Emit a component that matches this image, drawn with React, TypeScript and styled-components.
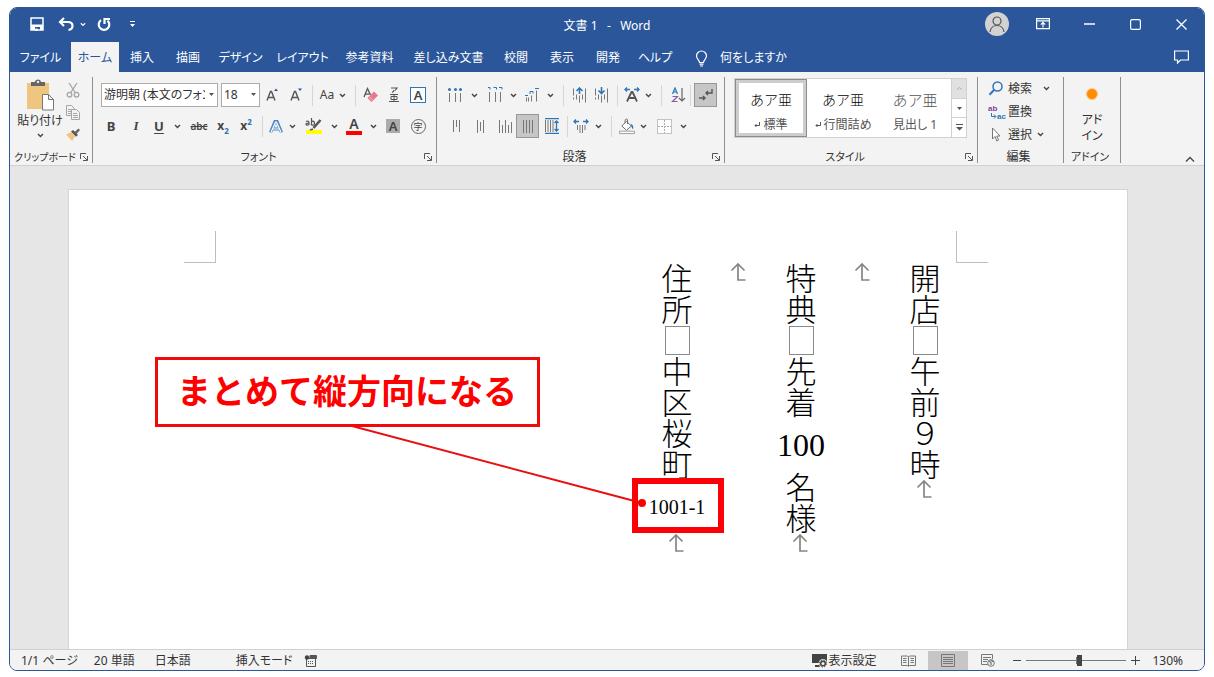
import React from 'react';
import styled, { createGlobalStyle, css } from 'styled-components';

const BLUE = '#2b579a';
const INK = '#444444';
const ACCENT = '#2e75b6';

const GlobalStyle = createGlobalStyle`
  *, *::before, *::after { box-sizing: border-box; }
  body { margin: 0; background: #fff; }
  body, button, select, input {
    font-family: "Noto Sans", "Noto Sans CJK JP", sans-serif;
    font-size: 12px;
    line-height: 16px;
    color: #333;
    font-feature-settings: "palt";
  }
  button { background: none; border: 0; padding: 0; margin: 0; }
`;

/* ---------- window frame ---------- */

const Desktop = styled.div`
  display: flex;
  min-height: 100vh;
  padding: 7px 9px 6px;
`;

const Window = styled.div`
  flex: 1;
  min-width: 0;
  display: flex;
  flex-direction: column;
  border: 1px solid ${BLUE};
  border-radius: 8px;
  overflow: hidden;
  background: #f3f3f3;
`;

const TitleBar = styled.header`
  display: grid;
  grid-template-columns: 1fr auto 1fr;
  align-items: start;
  height: 34px;
  background: ${BLUE};
  color: #fff;
`;

const QuickAccess = styled.div`
  display: flex;
  padding-left: 12px;
`;

const QuickButton = styled.button<{ $w: number }>`
  width: ${p => p.$w}px;
  height: 32px;
  display: flex;
  align-items: center;
  justify-content: center;
  color: #fff;
`;

const WindowTitle = styled.h1`
  margin: 0;
  padding-top: 10px;
  font-size: 12px;
  line-height: 16px;
  font-weight: 400;
  color: #fff;
  white-space: pre;
`;

const WindowControls = styled.div`
  display: flex;
  justify-content: flex-end;
`;

const ControlButton = styled.button`
  width: 46px;
  height: 32px;
  display: flex;
  align-items: center;
  justify-content: center;
  color: #fff;
`;

const Avatar = styled.span`
  width: 24px;
  height: 24px;
  border-radius: 50%;
  background: #d2d2d2;
  display: flex;
  align-items: center;
  justify-content: center;
`;

const TabBar = styled.nav`
  display: flex;
  height: 30px;
  background: ${BLUE};
`;

const Tab = styled.button<{ $w: number; $active?: boolean }>`
  width: ${p => p.$w}px;
  height: 30px;
  padding-top: 2px;
  display: flex;
  align-items: center;
  justify-content: center;
  white-space: nowrap;
  color: ${p => (p.$active ? BLUE : '#fff')};
  background: ${p => (p.$active ? '#f3f3f3' : 'transparent')};
`;

const TellMe = styled.button`
  display: flex;
  align-items: center;
  gap: 12px;
  padding: 2px 0 0 16px;
  color: #fff;
`;

const CommentButton = styled(ControlButton)`
  height: 30px;
  margin-left: auto;
`;

/* ---------- ribbon ---------- */

const Ribbon = styled.div`
  display: flex;
  padding: 5px 0 2px;
  height: 94px;
  background: #f3f3f3;
  border-bottom: 1px solid #d2d0ce;
`;

const Group = styled.section<{ $w: number }>`
  width: ${p => p.$w}px;
  flex: none;
  display: flex;
  flex-direction: column;
  justify-content: space-between;
  border-right: 1px solid #8f8f8f;
`;

const GroupFooter = styled.footer`
  display: flex;
  align-items: flex-end;
  height: 10px;
  padding-right: 4px;
`;

const GroupName = styled.span<{ $size: number }>`
  flex: 1;
  text-align: center;
  white-space: nowrap;
  font-size: ${p => p.$size}px;
  line-height: 12px;
`;

const Launcher = styled.button`
  display: flex;
  width: 8px;
  height: 10px;
`;

const ToolRows = styled.div`
  display: flex;
  flex-direction: column;
  gap: 7px;
  padding: 6px 0 0 8px;
`;

const ToolRow = styled.div`
  display: flex;
  align-items: center;
  height: 24px;
`;

const Tool = styled.button<{ $w: number; $pressed?: boolean }>`
  width: ${p => p.$w}px;
  height: 24px;
  flex: none;
  display: flex;
  align-items: center;
  justify-content: center;
  color: ${INK};
  line-height: 24px;
  ${p =>
    p.$pressed &&
    css`
      background: #c6c6c6;
      border: 1px solid #979797;
    `}
`;

const Divider = styled.span<{ $w: number }>`
  width: ${p => p.$w}px;
  flex: none;
  display: flex;
  justify-content: center;
  &::before {
    content: '';
    width: 1px;
    height: 21px;
    background: #d6d6d6;
  }
`;

const Letter = styled.span<{ $size?: number; $italic?: boolean }>`
  font-size: ${p => p.$size ?? 13}px;
  font-weight: 700;
  font-style: ${p => (p.$italic ? 'italic' : 'normal')};
  font-family: ${p => (p.$italic ? '"Liberation Serif", serif' : '"Noto Sans", sans-serif')};
`;

const Underlined = styled(Letter)`
  text-decoration: underline;
  text-underline-offset: 2px;
`;

const Struck = styled.span`
  font-size: 10px;
  font-weight: 600;
  text-decoration: line-through;
`;

const Script = styled.span<{ $raise?: boolean }>`
  font-size: 8px;
  line-height: 8px;
  font-weight: 700;
  color: ${ACCENT};
  align-self: ${p => (p.$raise ? 'flex-start' : 'flex-end')};
  padding: 4px 0 3px;
`;

const BoxedLetter = styled.span`
  width: 16px;
  height: 16px;
  border: 1px solid ${ACCENT};
  background: #fff;
  text-align: center;
  font-size: 13px;
  line-height: 14px;
  font-weight: 600;
`;

const ShadedLetter = styled.span`
  width: 14px;
  height: 14px;
  background: #ababab;
  text-align: center;
  font-size: 13px;
  line-height: 14px;
  font-weight: 600;
`;

const CircledLetter = styled.span`
  width: 15px;
  height: 15px;
  border: 1px solid #666;
  border-radius: 50%;
  text-align: center;
  font-size: 9px;
  line-height: 13px;
`;

const BarLetter = styled.span<{ $bar: string }>`
  width: 16px;
  height: 18px;
  border-bottom: 4px solid ${p => p.$bar};
  text-align: center;
  font-size: 14px;
  line-height: 13px;
  font-weight: 600;
`;

const Combo = styled.span<{ $w: number }>`
  position: relative;
  width: ${p => p.$w}px;
  height: 24px;
  flex: none;
  & + & { margin-left: 3px; }
`;

const ComboSelect = styled.select`
  appearance: none;
  width: 100%;
  height: 24px;
  padding: 0 12px 0 2px;
  border: 1px solid #ababab;
  border-radius: 0;
  background: #fff;
  color: #333;
`;

const ComboCaret = styled.svg`
  position: absolute;
  right: 4px;
  top: 10px;
  pointer-events: none;
`;

const ClipboardBody = styled.div`
  display: flex;
  gap: 3px;
  padding: 2px 0 0 7px;
`;

const PasteButton = styled.button`
  width: 46px;
  display: flex;
  flex-direction: column;
  align-items: center;
  white-space: nowrap;
`;

const PasteLabel = styled.span`
  padding-top: 2px;
`;

const IconStack = styled.div`
  display: flex;
  flex-direction: column;
`;

const StackButton = styled.button`
  width: 14px;
  height: 22px;
  display: flex;
  align-items: center;
  justify-content: center;
`;

const Gallery = styled.div`
  display: flex;
  margin: 1px 0 0 9px;
  width: 233px;
  height: 60px;
  background: #fff;
  border: 1px solid #d2d0ce;
`;

const StyleCard = styled.button<{ $selected?: boolean }>`
  width: 72px;
  height: 58px;
  display: flex;
  flex-direction: column;
  align-items: center;
  justify-content: flex-end;
  padding-bottom: 4px;
  gap: 9px;
  white-space: nowrap;
  ${p =>
    p.$selected &&
    css`
      border: 1px solid #8c8c8c;
      padding-bottom: 3px;
      box-shadow: inset 0 0 0 3px #cdcdcd;
    `}
`;

const Sample = styled.span<{ $light?: boolean }>`
  font-size: ${p => (p.$light ? 15 : 14)}px;
  line-height: 16px;
  font-weight: 300;
  color: ${p => (p.$light ? '#555' : '#000')};
  font-feature-settings: normal;
`;

const StyleName = styled.span`
  display: flex;
  align-items: center;
  gap: 3px;
  font-size: 12px;
  line-height: 16px;
  color: #555;
`;

const GalleryScroll = styled.div`
  flex: 1;
  display: flex;
  flex-direction: column;
`;

const ScrollButton = styled.button<{ $off?: boolean }>`
  flex: 1;
  display: flex;
  align-items: center;
  justify-content: center;
  border-left: 1px solid #d2d0ce;
  border-bottom: 1px solid #d2d0ce;
  background: ${p => (p.$off ? '#e1e1e1' : '#fff')};
  &:last-child { border-bottom: 0; }
`;

const EditList = styled.div`
  display: flex;
  flex-direction: column;
  padding-left: 10px;
`;

const EditButton = styled.button`
  display: grid;
  grid-template-columns: 18px auto auto;
  justify-content: start;
  align-items: center;
  height: 23px;
  column-gap: 2px;
`;

const EditLabel = styled.span<{ $gap?: number }>`
  padding-right: ${p => p.$gap ?? 0}px;
`;

const AddinButton = styled.button`
  display: flex;
  flex-direction: column;
  align-items: center;
  gap: 12px;
  padding-top: 11px;
`;

const Dot = styled.span`
  width: 12px;
  height: 12px;
  border-radius: 50%;
  border: 1px solid #ffc880;
  background: #ff8c00;
`;

const Collapse = styled.button`
  margin-left: auto;
  width: 28px;
  display: flex;
  align-items: flex-end;
  justify-content: center;
`;

/* ---------- document ---------- */

const Workspace = styled.main`
  flex: 1;
  display: flex;
  padding: 23px 76px 0 58px;
  background: #e6e6e6;
`;

const Page = styled.article`
  position: relative;
  flex: 1;
  min-width: 0;
  padding-top: 41px;
  background: #fff;
  border: 1px solid #d4d4d4;
  border-bottom: 0;
`;

const MarginMarks = styled.div`
  display: flex;
  justify-content: space-between;
  padding: 0 139px 0 115px;
`;

const MarginMark = styled.span<{ $side: 'left' | 'right' }>`
  width: 32px;
  height: 32px;
  border-bottom: 1px solid #bdbdbd;
  ${p => (p.$side === 'left' ? 'border-right' : 'border-left')}: 1px solid #bdbdbd;
`;

const Lines = styled.div`
  display: flex;
  flex-direction: row-reverse;
  padding-right: 171px;
`;

const Line = styled.div`
  width: 62px;
  display: flex;
  flex-direction: column;
  align-items: center;
`;

const Vertical = styled.span`
  writing-mode: vertical-rl;
  text-orientation: upright;
  font-family: "Noto Sans CJK JP", sans-serif;
  font-size: 31px;
  line-height: 31px;
  font-weight: 300;
  font-feature-settings: normal;
  color: #000;
`;

const SpaceMark = styled.span`
  width: 25px;
  height: 29px;
  margin: 1px 0;
  border: 1px solid #8a8a8a;
`;

const Across = styled.span<{ $size: number }>`
  position: relative;
  height: 54px;
  display: flex;
  align-items: center;
  font-family: "Liberation Serif", serif;
  font-size: ${p => p.$size}px;
  line-height: 32px;
  color: #000;
`;

const Highlight = styled.span`
  position: absolute;
  left: 50%;
  top: -2px;
  width: 92px;
  height: 55px;
  margin-left: -45px;
  border: 6px solid #fb0007;
`;

const Callout = styled.aside`
  position: absolute;
  right: 587px;
  top: 167px;
  padding: 12px 20px 13px 19px;
  border: 3px solid #f00a0a;
  background: #fff;
  color: #ff0000;
  font-size: 34px;
  line-height: 39px;
  font-weight: 700;
  font-feature-settings: normal;
  white-space: nowrap;
`;

const Leader = styled.svg`
  position: absolute;
  right: 476px;
  top: 236px;
`;

/* ---------- status bar ---------- */

const StatusBar = styled.footer`
  display: flex;
  align-items: center;
  height: 21px;
  padding: 1px 20px 0 11px;
  border-top: 1px solid #d2d0ce;
  background: #f3f3f3;
`;

const StatusItem = styled.button<{ $gap: number }>`
  display: flex;
  align-items: center;
  margin-right: ${p => p.$gap}px;
  white-space: nowrap;
`;

const ZoomLevel = styled(StatusItem)`
  margin-left: 8px;
`;

const ViewButton = styled.button<{ $on?: boolean }>`
  width: 40px;
  height: 20px;
  display: flex;
  align-items: center;
  justify-content: center;
  background: ${p => (p.$on ? '#c8c6c4' : 'transparent')};
`;

const Spacer = styled.span`
  flex: 1;
`;

const ZoomButton = styled.button`
  width: 18px;
  height: 20px;
  display: flex;
  align-items: center;
  justify-content: center;
`;

const ZoomSlider = styled.input`
  appearance: none;
  width: 100px;
  height: 14px;
  margin: 0;
  background: linear-gradient(#777, #777) center / 100% 1px no-repeat,
    linear-gradient(#777, #777) center / 1px 7px no-repeat;
  &::-webkit-slider-thumb {
    appearance: none;
    width: 5px;
    height: 11px;
    background: #444;
  }
`;

/* ---------- icons ---------- */

type Stroke = { d: string; w: number; h: number; c?: string; sw?: number };

const Draw = ({ d, w, h, c = 'currentColor', sw = 1 }: Stroke) => (
  <svg width={w} height={h} viewBox={`0 0 ${w} ${h}`} fill="none" stroke={c} strokeWidth={sw} aria-hidden="true">
    <path d={d} />
  </svg>
);

const Chevron = ({ c = '#444' }: { c?: string }) => <Draw w={7} h={5} d="M1 1 3.500 3.500 6 1" c={c} sw={1.4} />;
const Caret = () => (
  <svg width="5" height="3" viewBox="0 0 5 3" aria-hidden="true">
    <path d="M0 0h5L2.500 3z" fill="#555" />
  </svg>
);

const SaveIcon = () => (
  <svg width="14" height="14" viewBox="0 0 14 14" fill="none" stroke="#fff" strokeWidth="1.500">
    <path d="M1 1h12v12H1z" />
    <path d="M1 7.500h12V13h-3v-3H5v3H1z" fill="#fff" stroke="none" />
    <path d="M5.500 11.500h2V14h-2z" fill="#fff" stroke="none" />
  </svg>
);
const UndoIcon = () => (
  <svg width="16" height="14" viewBox="0 0 16 14" fill="none" stroke="#fff" strokeWidth="2.200">
    <path d="M6 1 2 5l4 4M2.500 5H10c3 0 4.500 1.800 4.500 4 0 2-1.500 3.500-4 4" />
  </svg>
);
const RedoIcon = () => (
  <svg width="14" height="15" viewBox="0 0 14 15" fill="none" stroke="#fff" strokeWidth="2.200">
    <path d="M4 3.200A5.300 5.300 0 1 0 10.500 3.600M7.500 7V2H13" />
  </svg>
);
const MoreIcon = () => (
  <svg width="5" height="7" viewBox="0 0 5 7" fill="#fff">
    <path d="M0 0h5v1H0zM0 3h5L2.500 6z" />
  </svg>
);
const PersonIcon = () => (
  <svg width="16" height="17" viewBox="0 0 16 17" fill="none" stroke="#555" strokeWidth="1.200">
    <circle cx="8" cy="5" r="4" />
    <path d="M1 16c.5-4 3.500-6.500 7-6.500s6.500 2.500 7 6.500" />
  </svg>
);
const RibbonModeIcon = () => (
  <svg width="14" height="12" viewBox="0 0 14 12" fill="none" stroke="#fff" strokeWidth="1.200">
    <path d="M.6.6h12.800v10H.6zM.6 2.800h12.800M7 9.500V4.600M4.800 6.600 7 4.400l2.200 2.200" />
  </svg>
);
const BulbIcon = () => (
  <svg width="13" height="17" viewBox="0 0 13 17" fill="none" stroke="#fff" strokeWidth="1.200">
    <path d="M4.500 12.500c0-2.500-3-3.500-3-6.500a5 5 0 0 1 10 0c0 3-3 4-3 6.500zM4.500 14.200h4M5 16h3" />
  </svg>
);
const CommentIcon = () => <Draw w={15} h={14} d="M.6 1h13.800v9H6.500L3.500 13v-3H.6z" c="#fff" sw={1.200} />;

const PasteIcon = () => (
  <svg width="30" height="32" viewBox="0 0 30 32">
    <path d="M2 4h22v26H2z" fill="#eec680" />
    <path d="M6 3h4c0-3.500 6-3.500 6 0h4v4H6z" fill="#666" />
    <circle cx="13" cy="3" r="1.200" fill="#eee" />
    <path d="M17.500 15.500h6l5 5V31h-11zM23.500 15.500v5h5" fill="#fff" stroke="#777" />
  </svg>
);
const CutIcon = () => (
  <svg width="14" height="15" viewBox="0 0 14 15" fill="none" stroke="#a6a6a6" strokeWidth="1.300">
    <path d="M3 0 9.500 10M11 0 4.500 10" />
    <circle cx="3.500" cy="11.700" r="2.300" />
    <circle cx="10.500" cy="11.700" r="2.300" />
  </svg>
);
const CopyIcon = () => (
  <svg width="14" height="15" viewBox="0 0 14 15" fill="#f3f3f3" stroke="#a6a6a6">
    <path d="M.5.5h5l2.500 2.500v7.500H.5zM2 4.500h4M2 6.500h4M2 8.500h4" />
    <path d="M5.500 4.500h5l3 3v7h-8zM7 8.500h4M7 10.500h5M7 12.500h5" />
  </svg>
);
const BrushIcon = () => (
  <svg width="14" height="13" viewBox="0 0 14 13">
    <path d="M0 6.500 5 4l4 4.500L6 13z" fill="#eec680" />
    <path d="m5 3.500 2-1.500 5 5-2 1.800z" fill="#555" />
    <path d="m8.500 4 4-3.500L14 2l-3.500 4z" fill="#666" />
  </svg>
);
const LauncherIcon = () => <Draw w={8} h={8} d="M.5 6V.5H6M3 3l4 4M7.500 3v4.500H3" c="#555" />;

const FontSize = ({ up }: { up: boolean }) => (
  <svg width="14" height="16" viewBox="0 0 14 16" fill="none">
    <path d="M1 13.500 4.500 4.500h1L9 13.500M2.300 10.500h5.400" stroke="#555" strokeWidth="1.400" />
    <path d={up ? 'M8 4 10 1.500 12 4z' : 'M8 1.500h4L10 4z'} fill={BLUE} />
  </svg>
);
const EraserIcon = () => (
  <svg width="16" height="16" viewBox="0 0 16 16" fill="none">
    <path d="M1 10 4.500 1.500 7.500 8M2.200 7.200h4" stroke="#555" strokeWidth="1.300" />
    <path d="m11 4.500 4 4-6.500 6.500-4-4z" fill="#e8788c" />
    <path d="m6 9.500 4 4" stroke="#f7c4cc" />
  </svg>
);
const RubyIcon = () => (
  <svg width="12" height="16" viewBox="0 0 12 16" fill="none" stroke="#555">
    <path d="M3 1h6L7 3.500M6 3c0 1.300-1 2-2 2.500" strokeWidth="1.200" />
    <path d="M2 7.500h8M3 9.500h6v3H3zM6 7v8M1 14.500h10" />
  </svg>
);
const EffectIcon = () => (
  <svg width="14" height="15" viewBox="0 0 14 15" fill="none">
    <path d="M1.500 13.500 6 2.500h2l4.500 11M4 10h6" stroke="#4a84c4" strokeWidth="3.200" />
    <path d="M1.900 13.500 6.500 3h1l4.600 10.500M4 10h6" stroke="#fff" strokeWidth="1.200" />
  </svg>
);
const HighlightIcon = () => (
  <svg width="18" height="18" viewBox="0 0 18 18" fill="none" stroke="#555" strokeWidth="1.200">
    <path d="M1 13h16v4H1z" fill="#ffff00" stroke="none" />
    <path d="M1 4.500c2-1 3 0 3 1V8M4 6C2 6 1 6.500 1 7.300S3 8.500 4 7.300M6.500 1v7.500M6.500 5c1-1.500 3.500-.8 3 1.500S7.500 8.500 6.500 7.500" />
    <path d="m15.500 3-7 8" strokeWidth="2.600" />
    <path d="m5 13 3-1" strokeWidth="1.500" />
  </svg>
);

const BulletsIcon = () => (
  <svg width="16" height="16" viewBox="0 0 16 16">
    <path d="M2.500 6v9M8.500 6v9M13.500 6v9" stroke="#777" />
    <circle cx="2.500" cy="2.500" r="1.500" fill={ACCENT} />
    <circle cx="8.500" cy="2.500" r="1.500" fill={ACCENT} />
    <circle cx="13.500" cy="2.500" r="1.500" fill={ACCENT} />
  </svg>
);
const NumbersIcon = () => (
  <svg width="16" height="16" viewBox="0 0 16 16" fill="none">
    <path d="M1 .5h2v2M6.500 .5h3v2M12 .5h3v2" stroke={ACCENT} />
    <path d="M2.500 5v10M8.500 5v10M13.500 5v10" stroke="#777" />
  </svg>
);
const LevelsIcon = () => (
  <svg width="16" height="16" viewBox="0 0 16 16" fill="none">
    <path d="M1 8.500h3M6 7V4.500h3v2M11 1.500h4" stroke={ACCENT} />
    <path d="M2.500 10.500v4M4.500 10.500v4M7.500 8.500v6M12.500 3.500v11" stroke="#777" />
  </svg>
);
const IndentIcon = ({ out }: { out?: boolean }) => (
  <svg width="15" height="16" viewBox="0 0 15 16" fill="none">
    <path d="M1.500 1.500v7M4.500 7.500v5M7.500 8.500v7M10.500 7.500v5M13.500 1.500v14M1.500 10.500v2" stroke="#777" />
    <path d={out ? 'M7.500 7V1M4.500 4l3-3 3 3' : 'M7.500 0v6M4.500 3.500l3 3 3-3'} stroke={ACCENT} strokeWidth="1.600" />
  </svg>
);
const ScaleIcon = () => (
  <svg width="16" height="16" viewBox="0 0 16 16" fill="none">
    <path d="M3 14.500 7.500 5h1L13 14.500M4.500 11h7" stroke="#555" strokeWidth="1.800" />
    <path d="M1 2.500h5M3 .5l-2 2 2 2M10 2.500h5M13 .5l2 2-2 2" stroke={ACCENT} strokeWidth="1.300" />
  </svg>
);
const SortIcon = () => (
  <svg width="15" height="16" viewBox="0 0 15 16" fill="none">
    <path d="M1.500 7 4 1l2.500 6M2.300 5h3.400" stroke={ACCENT} strokeWidth="1.200" />
    <path d="M1.500 9.500h5l-5 5h5" stroke="#8a5aa8" strokeWidth="1.200" />
    <path d="M11 1v13M8 11l3 3 3-3" stroke="#666" strokeWidth="1.200" />
  </svg>
);
const MarksIcon = () => (
  <svg width="15" height="14" viewBox="0 0 15 14" fill="none" stroke="#555" strokeWidth="1.400">
    <path d="M14 1v4H8M10 3 8 5l2 2M1 10h6M5 8l2 2-2 2" />
  </svg>
);
const Bars = ({ tops }: { tops: [number, number][] }) => (
  <svg width={tops.length * 3} height="15" viewBox={`0 0 ${tops.length * 3} 15`}>
    <path d={tops.map(([a, b], i) => `M${i * 3 + 1}.500 ${a}V${b}`).join('')} stroke="#777" />
  </svg>
);
const DistributeIcon = () => (
  <svg width="16" height="16" viewBox="0 0 16 16" fill="none">
    <path d="M1 .5h14M1 15.500h14M12.500 3v10M10.500 5l2-2 2 2M10.500 11l2 2 2-2" stroke={ACCENT} strokeWidth="1.300" />
    <path d="M1.500 2v12M4 2v12M6.500 2v12M9 2v12" stroke="#777" />
  </svg>
);
const SpacingIcon = () => (
  <svg width="16" height="16" viewBox="0 0 16 16" fill="none">
    <path d="M1 3.500h5M3 1.500l-2 2 2 2M10 3.500h5M13 1.500l2 2-2 2" stroke={ACCENT} strokeWidth="1.300" />
    <path d="M4.500 7v5M7 7v8M9.500 7v8M12 7v5" stroke="#777" />
  </svg>
);
const BucketIcon = () => (
  <svg width="17" height="17" viewBox="0 0 17 17" fill="none">
    <path d="m3 8 5-5 5 5-5 4.500zM6.500 5V1.500c1-1.500 2.500-1 2.500 0V6" fill="#fff" stroke="#666" />
    <path d="M12.500 5.500c2.500 1 3 3 2.500 6-1-.5-1.500-2-2-3.500z" fill={ACCENT} />
    <path d="M.5 13.500h16v2.500H.5z" fill="#fff" stroke="#999" />
  </svg>
);
const BordersIcon = () => (
  <svg width="15" height="15" viewBox="0 0 15 15" fill="none" stroke="#8a8a8a">
    <path d="M.5.5h14v14H.5z" strokeDasharray="1 1" fill="#fff" />
    <path d="M7.500 1v13M1 7.500h13" stroke="#aaa" strokeDasharray="2 1" />
  </svg>
);

const ReturnGlyph = () => <Draw w={6} h={6} d="M5.500 0v3.500H1M2.500 2 1 3.500 2.500 5" c="#555" />;

const SearchIcon = () => (
  <svg width="15" height="15" viewBox="0 0 15 15" fill="none" stroke={ACCENT} strokeWidth="1.500">
    <circle cx="9.500" cy="5.500" r="4.500" />
    <path d="M6.300 8.800 1.500 13.800" strokeWidth="2" />
  </svg>
);
const ReplaceIcon = () => (
  <svg width="18" height="18" viewBox="0 0 18 18" fontSize="8" fontWeight="700" fontFamily="Liberation Sans, sans-serif">
    <text x="0" y="8" fill="#7a4a9a">ab</text>
    <text x="9" y="16" fill={ACCENT}>ac</text>
    <path d="M3.500 10v3.500H7.500M6 11.500l2 2-2 2" stroke={ACCENT} fill="none" />
  </svg>
);
const SelectIcon = () => (
  <svg width="15" height="15" viewBox="0 0 15 15" fill="#fff" stroke="#777">
    <path d="M4.500 1v11l2.500-2.500L8.800 14l1.700-.8L8.700 9h3.300z" />
  </svg>
);

const ParagraphMark = styled.svg`
  flex: none;
`;
const ReturnMark = () => (
  <ParagraphMark width="18" height="18" viewBox="0 0 18 18" fill="none" stroke="#858585" strokeWidth="1.700">
    <path d="M1.500 7.500 8 1 14.500 7.500M8 1v16H15.500" />
  </ParagraphMark>
);

const MacroIcon = () => (
  <svg width="13" height="12" viewBox="0 0 13 12" fill="none" stroke="#555">
    <path d="M2.500 3.500h9v8h-9z" />
    <path d="M6 .5h6.500v3H6z" fill="#555" />
    <circle cx="3" cy="2.500" r="2.200" fill="#444" stroke="none" />
    <path d="M4 6.500h6M4 8.500h6" strokeDasharray="1 1" />
  </svg>
);
const DisplayIcon = () => (
  <svg width="16" height="15" viewBox="0 0 16 15">
    <path d="M0 1h15v9H0zM3 12h5v2H3z" fill="#444" />
    <circle cx="11" cy="10.500" r="4.400" fill="#f3f3f3" />
    <circle cx="11" cy="10.500" r="2.300" fill="none" stroke="#444" strokeWidth="1.500" />
    <circle cx="11" cy="10.500" r="3.500" fill="none" stroke="#444" strokeDasharray="1.500 1.250" />
  </svg>
);
const ReadIcon = () => (
  <Draw w={15} h={12} c="#777" d="M.5 1h6l1 1 1-1h6v9.500h-6l-1 1-1-1h-6zM7.500 2v9M2 3.500h3.500M2 5.500h3.500M2 7.500h3.500M9.500 3.500H13M9.500 5.500H13M9.500 7.500H13" />
);
const PrintIcon = () => <Draw w={14} h={13} c="#777" d="M.5.5h13v12H.5zM2 3.500h10M2 5.500h10M2 7.500h10M2 9.500h10" />;
const WebIcon = () => (
  <svg width="14" height="13" viewBox="0 0 14 13" fill="none" stroke="#777">
    <path d="M7 10.500H.5v-10h11V5M2 3.500h8M2 5.500h5M2 7.500h4" />
    <circle cx="10" cy="9" r="3.300" fill="#f3f3f3" />
    <path d="m8 7 2 1.500V11M10 6l2.500 2" strokeWidth="1.300" />
  </svg>
);

/* ---------- data ---------- */

const TABS: { name: string; w: number; active?: boolean }[] = [
  { name: 'ファイル', w: 61 },
  { name: 'ホーム', w: 48, active: true },
  { name: '挿入', w: 46 },
  { name: '描画', w: 46 },
  { name: 'デザイン', w: 59 },
  { name: 'レイアウト', w: 65 },
  { name: '参考資料', w: 69 },
  { name: '差し込み文書', w: 89 },
  { name: '校閲', w: 46 },
  { name: '表示', w: 46 },
  { name: '開発', w: 46 },
  { name: 'ヘルプ', w: 48 },
];

const Footer = ({ name, size = 11, launcher = true }: { name: string; size?: number; launcher?: boolean }) => (
  <GroupFooter>
    <GroupName $size={size}>{name}</GroupName>
    {launcher && (
      <Launcher aria-label={`${name}の設定`}>
        <LauncherIcon />
      </Launcher>
    )}
  </GroupFooter>
);

const ChevronTool = ({ w }: { w: number }) => (
  <Tool $w={w} aria-label="その他">
    <Chevron />
  </Tool>
);

export default function App() {
  return (
    <Desktop>
      <GlobalStyle />
      <Window>
        <TitleBar>
          <QuickAccess>
            <QuickButton $w={30} aria-label="上書き保存"><SaveIcon /></QuickButton>
            <QuickButton $w={28} aria-label="元に戻す"><UndoIcon /></QuickButton>
            <QuickButton $w={6} aria-label="元に戻す履歴"><Chevron c="#fff" /></QuickButton>
            <QuickButton $w={36} aria-label="やり直し"><RedoIcon /></QuickButton>
            <QuickButton $w={20} aria-label="カスタマイズ"><MoreIcon /></QuickButton>
          </QuickAccess>
          <WindowTitle>{'文書 1   -   Word'}</WindowTitle>
          <WindowControls>
            <ControlButton aria-label="アカウント"><Avatar><PersonIcon /></Avatar></ControlButton>
            <ControlButton aria-label="リボンの表示"><RibbonModeIcon /></ControlButton>
            <ControlButton aria-label="最小化"><Draw w={11} h={2} d="M0 1h11" sw={1.3} /></ControlButton>
            <ControlButton aria-label="最大化">
              <svg width="11" height="11" viewBox="0 0 11 11" fill="none" stroke="#fff" strokeWidth="1.200">
                <rect x=".6" y=".6" width="9.800" height="9.800" rx="1.500" />
              </svg>
            </ControlButton>
            <ControlButton aria-label="閉じる"><Draw w={11} h={11} d="M.5.5l10 10M10.500.5l-10 10" sw={1.3} /></ControlButton>
          </WindowControls>
        </TitleBar>

        <TabBar>
          {TABS.map(t => (
            <Tab key={t.name} $w={t.w} $active={t.active}>{t.name}</Tab>
          ))}
          <TellMe><BulbIcon />何をしますか</TellMe>
          <CommentButton aria-label="コメント"><CommentIcon /></CommentButton>
        </TabBar>

        <Ribbon>
          <Group $w={83}>
            <ClipboardBody>
              <PasteButton>
                <PasteIcon />
                <PasteLabel>貼り付け</PasteLabel>
                <Draw w={7} h={12} d="M1 5 3.500 7.500 6 5" c="#444" sw={1.4} />
              </PasteButton>
              <IconStack>
                <StackButton aria-label="切り取り"><CutIcon /></StackButton>
                <StackButton aria-label="コピー"><CopyIcon /></StackButton>
                <StackButton aria-label="書式のコピー"><BrushIcon /></StackButton>
              </IconStack>
            </ClipboardBody>
            <Footer name="クリップボード" size={10} />
          </Group>

          <Group $w={344}>
            <ToolRows>
              <ToolRow>
                <Combo $w={117}>
                  <ComboSelect aria-label="フォント"><option>游明朝 (本文のフォント)</option></ComboSelect>
                  <ComboCaret width="5" height="3" viewBox="0 0 5 3"><path d="M0 0h5L2.500 3z" fill="#555" /></ComboCaret>
                </Combo>
                <Combo $w={39}>
                  <ComboSelect aria-label="フォント サイズ"><option>18</option></ComboSelect>
                  <ComboCaret width="5" height="3" viewBox="0 0 5 3"><path d="M0 0h5L2.500 3z" fill="#555" /></ComboCaret>
                </Combo>
                <Tool $w={26} aria-label="フォントの拡大"><FontSize up /></Tool>
                <Tool $w={21} aria-label="フォントの縮小"><FontSize up={false} /></Tool>
                <Divider $w={10} />
                <Tool $w={20}>Aa</Tool>
                <ChevronTool w={10} />
                <Divider $w={16} />
                <Tool $w={16} aria-label="書式のクリア"><EraserIcon /></Tool>
                <Tool $w={30} aria-label="ルビ"><RubyIcon /></Tool>
                <Tool $w={18}><BoxedLetter>A</BoxedLetter></Tool>
              </ToolRow>
              <ToolRow>
                <Tool $w={20}><Letter>B</Letter></Tool>
                <Tool $w={30}><Letter $italic>I</Letter></Tool>
                <Tool $w={16}><Underlined>U</Underlined></Tool>
                <ChevronTool w={20} />
                <Tool $w={24}><Struck>abc</Struck></Tool>
                <Tool $w={24}><Letter $size={12}>x</Letter><Script>2</Script></Tool>
                <Tool $w={22}><Letter $size={12}>x</Letter><Script $raise>2</Script></Tool>
                <Divider $w={10} />
                <Tool $w={18} aria-label="文字の効果"><EffectIcon /></Tool>
                <ChevronTool w={14} />
                <Tool $w={30} aria-label="蛍光ペン"><HighlightIcon /></Tool>
                <ChevronTool w={10} />
                <Tool $w={30}><BarLetter $bar="#ff0000">A</BarLetter></Tool>
                <ChevronTool w={8} />
                <Tool $w={32}><ShadedLetter>A</ShadedLetter></Tool>
                <Tool $w={18}><CircledLetter>字</CircledLetter></Tool>
              </ToolRow>
            </ToolRows>
            <Footer name="フォント" />
          </Group>

          <Group $w={288}>
            <ToolRows>
              <ToolRow>
                <Tool $w={20} aria-label="箇条書き"><BulletsIcon /></Tool>
                <ChevronTool w={19} />
                <Tool $w={22} aria-label="段落番号"><NumbersIcon /></Tool>
                <ChevronTool w={14} />
                <Tool $w={24} aria-label="アウトライン"><LevelsIcon /></Tool>
                <ChevronTool w={12} />
                <Divider $w={14} />
                <Tool $w={18} aria-label="インデントを減らす"><IndentIcon out /></Tool>
                <Tool $w={26} aria-label="インデントを増やす"><IndentIcon /></Tool>
                <Divider $w={6} />
                <Tool $w={24} aria-label="拡張書式"><ScaleIcon /></Tool>
                <ChevronTool w={8} />
                <Divider $w={18} />
                <Tool $w={16} aria-label="並べ替え"><SortIcon /></Tool>
                <Divider $w={8} />
                <Tool $w={23} $pressed aria-label="編集記号の表示"><MarksIcon /></Tool>
              </ToolRow>
              <ToolRow>
                <Tool $w={22} aria-label="上揃え"><Bars tops={[[1, 13], [1, 8], [1, 13]]} /></Tool>
                <Tool $w={27} aria-label="中央揃え"><Bars tops={[[1, 14], [3, 12], [1, 14]]} /></Tool>
                <Tool $w={22} aria-label="下揃え"><Bars tops={[[1, 14], [6, 14], [1, 14], [6, 14], [3, 14]]} /></Tool>
                <Tool $w={23} $pressed aria-label="両端揃え"><Bars tops={[[1, 14], [1, 14], [1, 14], [1, 14]]} /></Tool>
                <Tool $w={26} aria-label="均等割り付け"><DistributeIcon /></Tool>
                <Divider $w={4} />
                <Tool $w={24} aria-label="行間"><SpacingIcon /></Tool>
                <ChevronTool w={10} />
                <Divider $w={16} />
                <Tool $w={16} aria-label="塗りつぶし"><BucketIcon /></Tool>
                <ChevronTool w={16} />
                <Tool $w={26} aria-label="罫線"><BordersIcon /></Tool>
                <ChevronTool w={12} />
              </ToolRow>
            </ToolRows>
            <Footer name="段落" size={12} />
          </Group>

          <Group $w={253}>
            <Gallery>
              <StyleCard $selected>
                <Sample>あア亜</Sample>
                <StyleName><ReturnGlyph />標準</StyleName>
              </StyleCard>
              <StyleCard>
                <Sample>あア亜</Sample>
                <StyleName><ReturnGlyph />行間詰め</StyleName>
              </StyleCard>
              <StyleCard>
                <Sample $light>あア亜</Sample>
                <StyleName>見出し 1</StyleName>
              </StyleCard>
              <GalleryScroll>
                <ScrollButton $off aria-label="前の行"><Draw w={5} h={3} d="M0 2.500 2.500.500 5 2.500" c="#aaa" /></ScrollButton>
                <ScrollButton aria-label="次の行"><Caret /></ScrollButton>
                <ScrollButton aria-label="すべて表示">
                  <svg width="7" height="7" viewBox="0 0 7 7" fill="#555"><path d="M0 0h7v1H0zM0 3h7L3.500 6.500z" /></svg>
                </ScrollButton>
              </GalleryScroll>
            </Gallery>
            <Footer name="スタイル" />
          </Group>

          <Group $w={86}>
            <EditList>
              <EditButton><SearchIcon /><EditLabel $gap={9}>検索</EditLabel><Chevron /></EditButton>
              <EditButton><ReplaceIcon /><EditLabel>置換</EditLabel></EditButton>
              <EditButton><SelectIcon /><EditLabel $gap={3}>選択</EditLabel><Chevron /></EditButton>
            </EditList>
            <Footer name="編集" size={12} launcher={false} />
          </Group>

          <Group $w={57}>
            <AddinButton>
              <Dot />
              <span>アド<br />イン</span>
            </AddinButton>
            <Footer name="アドイン" launcher={false} />
          </Group>

          <Collapse aria-label="リボンを折りたたむ"><Draw w={10} h={8} d="M1 6.500 5 2.500 9 6.500" c="#444" sw={1.3} /></Collapse>
        </Ribbon>

        <Workspace>
          <Page>
            <MarginMarks>
              <MarginMark $side="left" />
              <MarginMark $side="right" />
            </MarginMarks>
            <Lines>
              <Line>
                <Vertical>開店</Vertical>
                <SpaceMark />
                <Vertical>午前９時</Vertical>
                <ReturnMark />
              </Line>
              <Line><ReturnMark /></Line>
              <Line>
                <Vertical>特典</Vertical>
                <SpaceMark />
                <Vertical>先着</Vertical>
                <Across $size={32}>100</Across>
                <Vertical>名様</Vertical>
                <ReturnMark />
              </Line>
              <Line><ReturnMark /></Line>
              <Line>
                <Vertical>住所</Vertical>
                <SpaceMark />
                <Vertical>中区桜町</Vertical>
                <Across $size={20}>1001-1<Highlight /></Across>
                <ReturnMark />
              </Line>
            </Lines>
            <Callout>まとめて縦方向になる</Callout>
            <Leader width="300" height="90" viewBox="0 0 300 90">
              <path d="M1 0 291 77" stroke="#e81010" strokeWidth="2" />
              <circle cx="291" cy="77" r="4" fill="#ff0000" />
            </Leader>
          </Page>
        </Workspace>

        <StatusBar>
          <StatusItem $gap={16}>1/1 ページ</StatusItem>
          <StatusItem $gap={20}>20 単語</StatusItem>
          <StatusItem $gap={45}>日本語</StatusItem>
          <StatusItem $gap={12}>挿入モード</StatusItem>
          <StatusItem $gap={0} aria-label="マクロの記録"><MacroIcon /></StatusItem>
          <Spacer />
          <StatusItem $gap={12}><DisplayIcon />表示設定</StatusItem>
          <ViewButton aria-label="閲覧モード"><ReadIcon /></ViewButton>
          <ViewButton $on aria-label="印刷レイアウト"><PrintIcon /></ViewButton>
          <ViewButton aria-label="Web レイアウト"><WebIcon /></ViewButton>
          <ZoomButton aria-label="縮小"><Draw w={8} h={9} d="M0 4.500h8" c="#444" /></ZoomButton>
          <ZoomSlider type="range" min={0} max={100} defaultValue={53} aria-label="ズーム" />
          <ZoomButton aria-label="拡大"><Draw w={9} h={9} d="M0 4.500h9M4.500 0v9" c="#444" /></ZoomButton>
          <ZoomLevel $gap={1}>130%</ZoomLevel>
        </StatusBar>
      </Window>
    </Desktop>
  );
}
